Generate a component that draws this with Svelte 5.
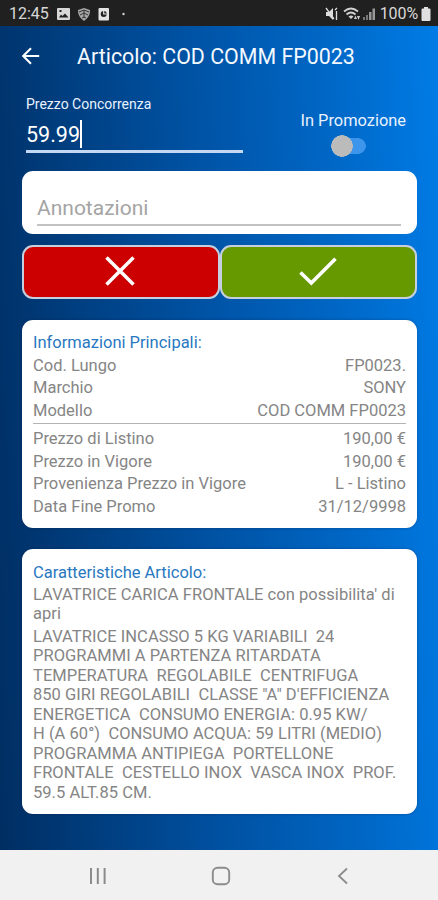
<script lang="ts">
  let price = $state("59.99");
  let promo = $state(false);

  const info = [
    { label: "Cod. Lungo", value: "FP0023." },
    { label: "Marchio", value: "SONY" },
    { label: "Modello", value: "COD COMM FP0023" },
  ];

  const prices = [
    { label: "Prezzo di Listino", value: "190,00 €" },
    { label: "Prezzo in Vigore", value: "190,00 €" },
    { label: "Provenienza Prezzo in Vigore", value: "L - Listino" },
    { label: "Data Fine Promo", value: "31/12/9998" },
  ];

  const description = [
    "LAVATRICE INCASSO 5 KG VARIABILI  24",
    "PROGRAMMI A PARTENZA RITARDATA",
    "TEMPERATURA  REGOLABILE  CENTRIFUGA",
    "850 GIRI REGOLABILI  CLASSE \"A\" D'EFFICIENZA",
    "ENERGETICA  CONSUMO ENERGIA: 0.95 KW/",
    "H (A 60°)  CONSUMO ACQUA: 59 LITRI (MEDIO)",
    "PROGRAMMA ANTIPIEGA  PORTELLONE",
    "FRONTALE  CESTELLO INOX  VASCA INOX  PROF.",
    "59.5 ALT.85 CM.",
  ].join("\n");
</script>

<div class="screen">
  <div class="status">
    <span class="clock">12:45</span>
    <svg class="notifications" width="72" height="16" viewBox="0 0 72 16">
      <path fill="#d8d8d8" fill-rule="evenodd" d="M2 2h11q1 0 1 1v10q0 1-1 1H2q-1 0-1-1V3q0-1 1-1zM3 11.5h9.500l-3.500-4-2.500 2.500-1.500-1.500zM3.500 4v2h2V4z" />
      <path fill="#a8a8a8" d="M28 2l6 2c0 5-2 8-6 11-4-3-6-6-6-11z" />
      <path fill="none" stroke="#333" stroke-width="1" d="M23 6l5-2 5 2M24 9l4-2 4 2M26 12l2-1 2 1M28 4v8" />
      <rect x="42.500" y="2" width="10.500" height="12.500" rx="1" fill="#e3e3e3" />
      <circle cx="47.700" cy="8" r="3" fill="#222" />
      <path fill="none" stroke="#e3e3e3" stroke-width="1.200" d="M47.700 5v3h3" />
      <circle cx="67.500" cy="8" r="1.200" fill="#d0d0d0" />
    </svg>
    <svg class="signals" width="54" height="16" viewBox="0 0 54 16">
      <path fill="#ddd" d="M2 6h3l4-4v12l-4-4H2z" />
      <path fill="none" stroke="#ddd" stroke-width="1.300" d="M2 2l8 11M11 4l2-2M12.500 5v9" />
      <path fill="none" stroke="#d0d0d0" stroke-width="1.700" d="M20 5.500q7-6 14 0M22.500 8.500q4.500-4 9 0" />
      <path fill="#d0d0d0" d="M24.500 10.500q2.500-2 5 0L27 13zM30 13l1.500-3.500L33 13zM33 10h3l-1.500 4z" />
      <path fill="#777" d="M39 11h2v3h-2zM42 9h2v5h-2z" />
      <path fill="#999" d="M45 6h2.500v8H45zM48.500 2.500H51V14h-2.500z" />
    </svg>
    <span class="percent">100%</span>
    <svg width="10" height="14" viewBox="0 0 10 14">
      <path fill="#e0e0e0" d="M3 0h4v1.500h1.500q1 0 1 1V13q0 1-1 1h-7q-1 0-1-1V2.500q0-1 1-1H3z" />
    </svg>
  </div>

  <main>
    <header>
      <svg width="18" height="18" viewBox="0 0 18 18">
        <path d="M17.200 9H1.500M9 1.200L1.200 9 9 16.800" fill="none" stroke="#fff" stroke-width="2.100" />
      </svg>
      <h1>Articolo: COD COMM FP0023</h1>
    </header>

    <section class="entry">
      <div class="price">
        <div class="price-label">Prezzo Concorrenza</div>
        <div class="price-value"><span>{price}</span><i class="caret"></i></div>
      </div>
      <div class="promo">
        <div class="promo-label">In Promozione</div>
        <button
          class="switch"
          class:on={promo}
          aria-label="In Promozione"
          onclick={() => (promo = !promo)}
        ></button>
      </div>
    </section>

    <section class="notes">
      <div class="notes-input"><span>Annotazioni</span></div>
    </section>

    <section class="actions">
      <button class="cancel" aria-label="Annulla">
        <svg width="30" height="30" viewBox="0 0 30 30">
          <path d="M1.500 1.500l27 27M28.500 1.500l-27 27" fill="none" stroke="#fff" stroke-width="3.500" />
        </svg>
      </button>
      <button class="confirm" aria-label="Conferma">
        <svg width="38" height="30" viewBox="0 0 38 30">
          <path d="M1.500 16.500L12.300 27 36.500 2.800" fill="none" stroke="#fff" stroke-width="3.600" />
        </svg>
      </button>
    </section>

    <section class="card info">
      <h2><span>Informazioni Principali:</span></h2>
      {#each info as row}
        <div class="row"><span>{row.label}</span><span>{row.value}</span></div>
      {/each}
      <div class="divider"></div>
      {#each prices as row}
        <div class="row"><span>{row.label}</span><span>{row.value}</span></div>
      {/each}
    </section>

    <section class="card details">
      <h2><span>Caratteristiche Articolo:</span></h2>
      <p>LAVATRICE CARICA FRONTALE con possibilita' di<br />apri</p>
      <p>{description}</p>
    </section>
  </main>

  <nav>
    <svg width="18" height="18" viewBox="0 0 18 18">
      <path d="M2 1v16M8.800 1v16M15.600 1v16" stroke="#8b8b8b" stroke-width="2" />
    </svg>
    <svg width="20" height="20" viewBox="0 0 20 20">
      <rect x="1.800" y="1.800" width="16.400" height="16.400" rx="4.800" fill="none" stroke="#8b8b8b" stroke-width="1.900" />
    </svg>
    <svg width="18" height="18" viewBox="0 0 18 18">
      <path d="M13 1.500L5 9l8 7.500" fill="none" stroke="#8b8b8b" stroke-width="1.800" />
    </svg>
  </nav>
</div>

<style>
  :global(body) {
    margin: 0;
  }

  .screen {
    width: 438px;
    height: 900px;
    display: flex;
    flex-direction: column;
    overflow: hidden;
    font-family: Roboto, sans-serif;
  }

  .screen * {
    box-sizing: border-box;
  }

  .status {
    height: 26px;
    flex: none;
    display: flex;
    align-items: center;
    padding: 1px 7px 0 9px;
    background: #202020;
    color: #d8d8d8;
    font-size: 16px;
  }

  .clock {
    width: 47px;
  }

  .signals {
    margin-left: auto;
    margin-right: 2px;
  }

  .percent {
    margin-right: 3px;
    letter-spacing: -0.1px;
  }

  main {
    height: 824px;
    flex: none;
    padding: 0 21px 0 22px;
    background: linear-gradient(87deg, #002e62 0%, #0050a0 45%, #0066c4 75%, #007ce6 100%);
  }

  header {
    height: 60px;
    display: flex;
    align-items: center;
    gap: 37px;
  }

  h1 {
    margin: 0;
    color: #f4f8ff;
    font-size: 21.400px;
    font-weight: 400;
    white-space: nowrap;
  }

  .entry {
    height: 85px;
    display: flex;
    justify-content: space-between;
    color: #e8f2ff;
  }

  .price {
    width: 217px;
    height: 67px;
    margin-left: 4px;
    padding-top: 10px;
    border-bottom: 3px solid #c4d8f4;
  }

  .price-label {
    height: 17px;
    line-height: 17px;
    font-size: 14px;
  }

  .price-value {
    height: 37px;
    padding-top: 5px;
    display: flex;
    align-items: center;
    color: #fff;
    font-size: 21.500px;
  }

  .caret {
    width: 2px;
    height: 28px;
    background: #fff;
  }

  .promo {
    padding: 24px 11px 0 0;
    display: flex;
    flex-direction: column;
    align-items: center;
  }

  .promo-label {
    height: 22px;
    line-height: 22px;
    font-size: 16.400px;
  }

  .switch {
    width: 35px;
    height: 22px;
    margin: 3px 0 0 -9px;
    padding: 0;
    border: none;
    background:
      radial-gradient(circle at 11px 11px, #bbb 10.500px, transparent 11px),
      radial-gradient(circle at 27px 11px, #3d96ec 7.500px, transparent 8px),
      linear-gradient(#3d96ec, #3d96ec) 11px 3px / 16px 16px no-repeat;
  }

  .switch.on {
    transform: scaleX(-1);
  }

  .notes {
    height: 63px;
    padding: 0 16px 0 15px;
    border-radius: 11px;
    background: #fff;
  }

  .notes-input {
    height: 55px;
    padding-top: 23px;
    border-bottom: 2px solid #c2c2c2;
    color: #a4a4a4;
    font-size: 21px;
    line-height: 28px;
  }

  .actions {
    height: 54px;
    margin-top: 11px;
    display: flex;
  }

  .actions button {
    flex: 1;
    padding: 0 1px 2px 0;
    display: flex;
    align-items: center;
    justify-content: center;
    border: 2px solid #c6cfdd;
    border-radius: 11px;
  }

  .actions .cancel {
    background: #cc0000;
  }

  .actions .confirm {
    background: #669900;
  }

  .card {
    padding: 12px 11px 0;
    border-radius: 11px;
    background: #fff;
    box-shadow: 0 0 3px rgba(0, 20, 60, 0.35);
    color: #858585;
    font-size: 16.500px;
  }

  .info {
    height: 208px;
    margin-top: 21px;
  }

  .details {
    height: 265px;
    margin-top: 21px;
  }

  h2 {
    height: 22.500px;
    margin: 0;
    color: #2878c0;
    font-size: 16.500px;
    font-weight: 400;
    line-height: 22.500px;
  }

  .details h2 {
    height: 23.500px;
    padding-top: 0.500px;
  }

  .row {
    height: 22.500px;
    display: flex;
    justify-content: space-between;
    line-height: 22.500px;
  }

  .divider {
    height: 1.500px;
    margin: 0.500px 0 4.200px;
    background: #b4b4b4;
  }

  p {
    margin: 0 0 3px;
    line-height: 19.500px;
    white-space: pre;
  }

  .details p {
    letter-spacing: 0.035px;
  }

  nav {
    flex: 1;
    display: flex;
    align-items: center;
    justify-content: space-between;
    padding: 2px 86px 0 89px;
    background: #f1f1f1;
  }
</style>
